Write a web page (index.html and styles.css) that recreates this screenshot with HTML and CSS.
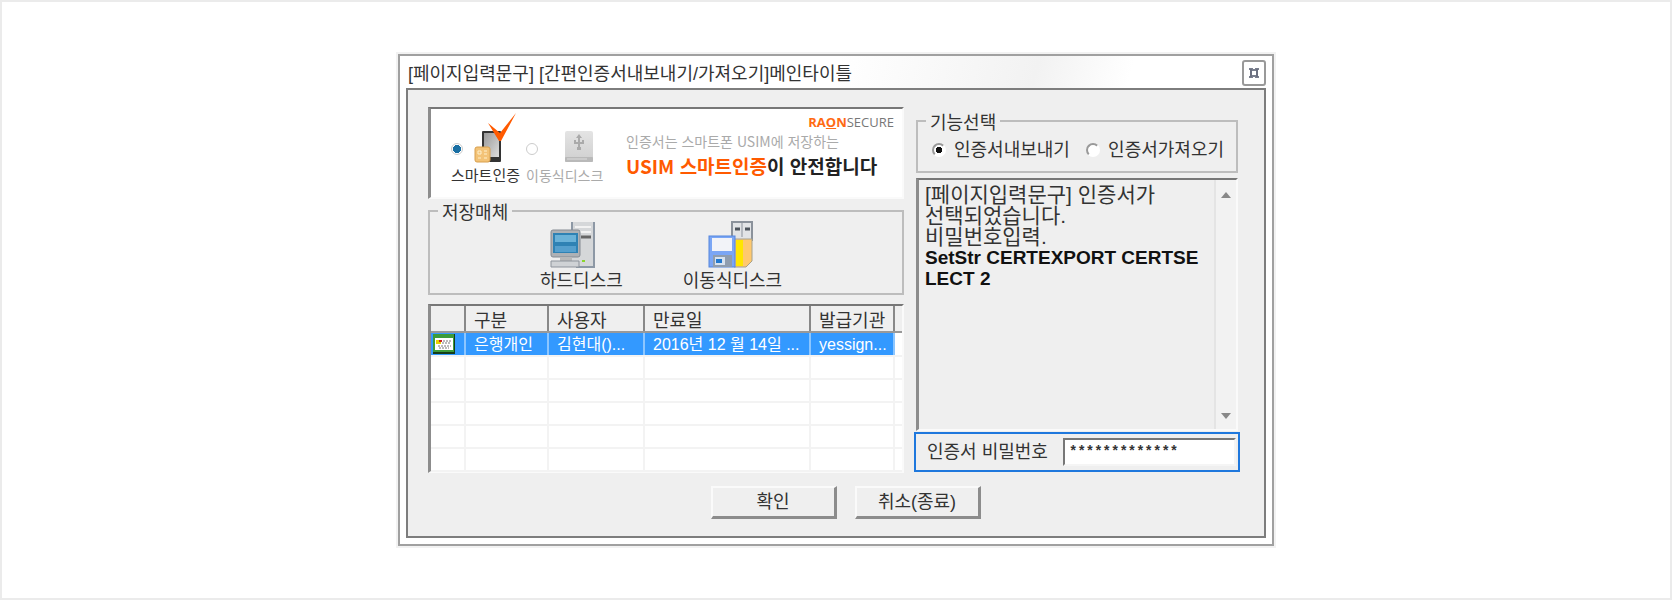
FILE: index.html
```html
<!DOCTYPE html>
<html lang="ko">
<head>
  <meta charset="UTF-8" />
  <meta name="viewport" content="width=device-width, initial-scale=1.0"/>
  <title>간편인증서 내보내기/가져오기</title>
  <link rel="stylesheet" href="styles.css">
</head>
<body>
  <form class="window">
    <div class="titlebar">
      <h1>[페이지입력문구] [간편인증서내보내기/가져오기]메인타이틀</h1>
      <button class="close" type="button" aria-label="닫기">
        <svg width="12" height="12" viewBox="0 0 12 12" fill="none" stroke="#7a7f8e" stroke-width="2">
          <path d="M1 2h4M7 2h4M1 10h4M7 10h4M4 3h4M4 9h4"/>
          <path d="M3 2v8M9 2v8" stroke="#6b7080"/>
        </svg>
      </button>
    </div>

    <div class="panel">
      <div class="columns">
        <div class="left">
          <div class="banner sunken">
            <div class="media">
              <label class="medium">
                <input type="radio" name="medium" checked>
                <svg width="44" height="50" viewBox="0 0 44 50">
                  <defs>
                    <linearGradient id="phone" x1="0" y1="0" x2="1" y2="1">
                      <stop offset="0" stop-color="#999"/>
                      <stop offset="1" stop-color="#ddd"/>
                    </linearGradient>
                  </defs>
                  <rect x="8" y="18" width="19" height="31" rx="1" fill="#333"/>
                  <rect x="10" y="20" width="15" height="24" fill="url(#phone)"/>
                  <rect x="1" y="34" width="15" height="15" rx="2" fill="#f3c377" stroke="#d9a04e"/>
                  <path d="M4 38h3v3h-3zM10 38h3M10 41h3M4 45h3M10 45h3" fill="none" stroke="#fff0cc"/>
                  <path d="M14 10L26 20L42 0L27 28L25 28Z" fill="#ff5a00"/>
                </svg>
                <span>스마트인증</span>
              </label>
              <label class="medium off">
                <input type="radio" name="medium">
                <svg width="30" height="50" viewBox="0 0 30 50">
                  <defs>
                    <linearGradient id="drive" x1="0" y1="0" x2="0" y2="1">
                      <stop offset="0" stop-color="#e4e4e4"/>
                      <stop offset="1" stop-color="#cfcfcf"/>
                    </linearGradient>
                  </defs>
                  <rect x="1" y="18" width="28" height="31" rx="2" fill="url(#drive)"/>
                  <rect x="1" y="44" width="28" height="5" rx="1" fill="#b9b9b9"/>
                  <path d="M3 46h20" stroke="#ddd"/>
                  <path d="M15 36V25M11 27v3h8v-3" fill="none" stroke="#aaa" stroke-width="2"/>
                  <path d="M12 25l3-4 3 4zM13 34h4v3h-4z" fill="#aaa"/>
                </svg>
                <span>이동식디스크</span>
              </label>
            </div>
            <div class="slogan">
              <div class="brand"><b>RA<span class="brand-o">O</span>N</b>SECURE</div>
              <p class="lead">인증서는 스마트폰 USIM에 저장하는</p>
              <p class="claim"><em>USIM 스마트인증</em>이 안전합니다</p>
            </div>
          </div>

          <fieldset class="group storage">
            <legend>저장매체</legend>
            <div class="disks">
              <button type="button" class="disk">
                <svg width="62" height="48" viewBox="0 0 62 48">
                  <path d="M22 1h22v45H22z" fill="#d5d7d9"/>
                  <path d="M22 1v12M44 1v45H26" fill="none" stroke="#8d98a5" stroke-width="2"/>
                  <path d="M25 6h16M25 11h16" stroke="#f2f2f2" stroke-width="2"/>
                  <path d="M31 16h10" stroke="#666" stroke-width="3"/>
                  <rect x="1" y="9" width="29" height="27" rx="2" fill="#aeb1b5" stroke="#858b93"/>
                  <rect x="3" y="12" width="25" height="20" fill="#2f82b4"/>
                  <path d="M5 14h21v7H5z" fill="#6bb2d8"/>
                  <path d="M5 25h21v6H5z" fill="#559fcd"/>
                  <path d="M10 36h12v4H10z" fill="#b8b8b8"/>
                  <path d="M1 40h28v6H1z" fill="#cfd2d5" stroke="#8d939b"/>
                  <path d="M32 40h3" stroke="#8ad52c" stroke-width="2"/>
                </svg>
                <span>하드디스크</span>
              </button>
              <button type="button" class="disk">
                <svg width="48" height="48" viewBox="0 0 48 48">
                  <rect x="24" y="1" width="20" height="18" fill="#e2e4e6" stroke="#8b929b" stroke-width="2"/>
                  <path d="M34 2v14" stroke="#8b929b"/>
                  <path d="M27 8h5M37 8h5" stroke="#4d545c" stroke-width="3"/>
                  <path d="M26 18h18v22l-6 6H26z" fill="#ffc96e" stroke="#a6a08c"/>
                  <path d="M28 19h7v26h-7z" fill="#ffe600"/>
                  <rect x="1" y="15" width="26" height="31" fill="#7ba6f5" stroke="#5585dd"/>
                  <rect x="4" y="17" width="20" height="13" fill="#f2f3f8"/>
                  <path d="M5 34h19v12H5z" fill="#8f9daf"/>
                  <path d="M7 36h10v8H7z" fill="#d7e2f0"/>
                  <path d="M8 38h6v4H8z" fill="#2379cf"/>
                </svg>
                <span>이동식디스크</span>
              </button>
            </div>
          </fieldset>

          <div class="list sunken">
            <table>
              <colgroup>
                <col class="c-icon"><col class="c-type"><col class="c-user"><col class="c-date"><col class="c-issuer"><col>
              </colgroup>
              <thead>
                <tr><th></th><th>구분</th><th>사용자</th><th>만료일</th><th>발급기관</th><th></th></tr>
              </thead>
              <tbody>
                <tr class="selected">
                  <td class="cert">
                    <svg width="22" height="20" viewBox="0 0 22 20">
                      <rect width="22" height="20" fill="#153d19"/>
                      <rect width="21" height="18" fill="#3c9b3a"/>
                      <rect x="2" y="4" width="18" height="12" fill="#fff"/>
                      <path d="M3 6h5v4H3z" fill="#e6d400"/>
                      <path d="M6 7h3" stroke="#c22" stroke-width="2"/>
                      <path d="M10 7h8M9 9h9M5 12h13M6 14h10" stroke="#777" stroke-dasharray="2 1"/>
                    </svg>
                  </td>
                  <td>은행개인</td><td>김현대()...</td><td>2016년 12 월 14일 ...</td><td>yessign...</td><td></td>
                </tr>
                <tr><td></td><td></td><td></td><td></td><td></td><td></td></tr>
                <tr><td></td><td></td><td></td><td></td><td></td><td></td></tr>
                <tr><td></td><td></td><td></td><td></td><td></td><td></td></tr>
                <tr><td></td><td></td><td></td><td></td><td></td><td></td></tr>
                <tr><td></td><td></td><td></td><td></td><td></td><td></td></tr>
              </tbody>
            </table>
          </div>
        </div>

        <div class="right">
          <fieldset class="group mode">
            <legend>기능선택</legend>
            <div class="modes">
              <label><input type="radio" name="mode" checked>인증서내보내기</label>
              <label><input type="radio" name="mode">인증서가져오기</label>
            </div>
          </fieldset>

          <div class="log sunken">
            <div class="log-text">
              <p>[페이지입력문구] 인증서가 선택되었습니다.</p>
              <p>비밀번호입력.</p>
              <p class="code">SetStr CERTEXPORT CERTSELECT 2</p>
            </div>
            <div class="scrollbar">
              <svg width="10" height="6" viewBox="0 0 10 6"><path d="M0 6L5 0L10 6Z" fill="#888"/></svg>
              <svg width="10" height="6" viewBox="0 0 10 6"><path d="M0 0L5 6L10 0Z" fill="#888"/></svg>
            </div>
          </div>

          <div class="password">
            <label for="certPassword">인증서 비밀번호</label>
            <input type="text" id="certPassword" value="*************" autocomplete="off">
          </div>
        </div>
      </div>

      <div class="buttons">
        <button class="button" type="submit">확인</button>
        <button class="button" type="button">취소(종료)</button>
      </div>
    </div>
  </form>
</body>
</html>
```
FILE: styles.css
```css
* {
  box-sizing: border-box;
}

body {
  margin: 0;
  min-height: 100vh;
  display: flex;
  align-items: center;
  justify-content: center;
  background-color: #fff;
  border: 2px solid #ebebeb;
  font-family: "Liberation Sans", "Noto Sans CJK KR", sans-serif;
  font-size: 18px;
  line-height: 20px;
  color: #333;
}

button, input {
  font: inherit;
  color: inherit;
  margin: 0;
}

p, h1 {
  margin: 0;
}

.window {
  width: 100%;
  max-width: 876px;
  padding: 0 6px 6px;
  border: 2px solid #a0a0a0;
  box-shadow: 0 0 0 2px #f2f2f2;
}

.titlebar {
  display: flex;
  align-items: center;
  justify-content: space-between;
  height: 32px;
  padding-left: 2px;
  background: linear-gradient(105deg, #fff 50%, #f2f2f2 73%, #fff 84%);
}

h1 {
  padding-top: 4px;
  font-size: 18px;
  font-weight: normal;
}

.close {
  display: flex;
  align-items: center;
  justify-content: center;
  width: 24px;
  height: 26px;
  margin-top: 2px;
  padding: 0;
  background: #fff;
  border: 2px solid #999;
  border-radius: 3px;
}

.panel {
  padding: 17px 24px 17px 20px;
  background-color: #efefef;
  border: 2px solid #7d7d7d;
}

.columns {
  display: flex;
  gap: 10px;
}

.left {
  flex: 1;
  min-width: 0;
}

.right {
  width: 326px;
}

.sunken {
  border: 2px solid #fafafa;
  border-top-color: #777;
  border-left: 3px solid #8c8c8c;
}

/* banner */
.banner {
  display: flex;
  justify-content: space-between;
  height: 92px;
  padding: 4px 8px 0 20px;
  background-color: #fff;
}

.media {
  display: flex;
  gap: 6px;
}

.medium {
  display: grid;
  grid-template-columns: auto auto;
  justify-content: center;
  align-content: start;
  align-items: end;
  column-gap: 8px;
  font-size: 15px;
}

.medium span {
  grid-column: 1 / 3;
  padding-top: 3px;
}

.off {
  column-gap: 16px;
  font-size: 14px;
  color: #aaa;
}

input[type="radio"] {
  appearance: none;
  width: 14px;
  height: 14px;
  flex: none;
  border: 2px solid #999;
  border-right-color: #fff;
  border-bottom-color: #fff;
  border-radius: 50%;
  background-color: #fff;
}

input[type="radio"]:checked {
  background-image: radial-gradient(circle, #111 3px, transparent 3px);
}

.medium input[type="radio"] {
  width: 12px;
  height: 12px;
  margin-bottom: 8px;
  border: 1px solid #ccc;
}

.medium input[type="radio"]:checked {
  background-image: radial-gradient(circle, #1a6fa3 4px, transparent 4px);
}

.slogan {
  width: 268px;
  font-family: "Noto Sans CJK KR", sans-serif;
}

.brand {
  text-align: right;
  font-family: "Open Sans", sans-serif;
  font-size: 13px;
  line-height: 18px;
  color: #777;
}

.brand b {
  color: #ff6a13;
}

.brand-o {
  text-decoration: underline;
}

.lead {
  font-size: 14px;
  line-height: 20px;
  color: #aaa;
}

.claim {
  font-size: 19px;
  line-height: 30px;
  font-weight: bold;
  color: #222;
}

.claim em {
  font-style: normal;
  color: #ff5a00;
}

/* group boxes */
.group {
  margin: 0;
  padding: 0;
  border: 2px solid #bdbdbd;
}

.group legend {
  margin-left: 8px;
  padding: 4px 4px 0;
}

.group.storage {
  height: 96px;
}

.disks {
  display: flex;
  gap: 60px;
  padding-left: 110px;
}

.disk {
  display: flex;
  flex-direction: column;
  align-items: center;
  gap: 2px;
  margin-top: -2px;
  padding: 0;
  background: none;
  border: none;
}

/* certificate list */
.list {
  margin-top: 9px;
  height: 169px;
  background-color: #fff;
}

table {
  width: 100%;
  table-layout: fixed;
  border-collapse: collapse;
}

.c-icon { width: 34px; }
.c-type { width: 83px; }
.c-user { width: 96px; }
.c-date { width: 166px; }
.c-issuer { width: 84px; }

th, td {
  height: 23px;
  padding: 0 0 0 8px;
  text-align: left;
  font-weight: normal;
  white-space: nowrap;
  overflow: hidden;
}

th {
  height: 26px;
  padding-top: 4px;
  background-color: #efefef;
  border-right: 2px solid #888;
  border-bottom: 2px solid #999;
}

th:last-child {
  border-right: none;
}

td {
  border-right: 2px solid #f3f3f3;
  border-bottom: 2px solid #f3f3f3;
}

td:last-child {
  border-right: none;
}

.selected td {
  height: 24px;
  padding-top: 2px;
  font-size: 16px;
  color: #fff;
  background-color: #3399ff;
  border-right-color: #8cc6ff;
}

.selected td:last-child {
  background-color: #fff;
}

.selected .cert {
  padding: 0 0 0 2px;
}

.cert svg {
  display: block;
}

/* right column */
.group.mode {
  height: 64px;
  margin: 2px 2px 0;
}

.modes {
  display: flex;
  justify-content: space-between;
  padding: 7px 12px 0 14px;
}

.modes label {
  display: flex;
  align-items: center;
  gap: 8px;
  height: 20px;
}

.log {
  display: flex;
  height: 253px;
  margin: 5px 2px 0;
}

.log-text {
  flex: 1;
  padding: 4px 12px 0 6px;
  font-size: 21px;
  line-height: 21px;
  word-break: keep-all;
}

.log-text .code {
  font-size: 19px;
  font-weight: bold;
  color: #111;
  word-break: break-all;
}

.scrollbar {
  display: flex;
  flex-direction: column;
  align-items: center;
  justify-content: space-between;
  width: 22px;
  padding: 12px 0 10px;
  background-color: #f2f2f2;
  border-left: 2px solid #e4e4e4;
}

.password {
  display: flex;
  align-items: center;
  justify-content: space-between;
  height: 40px;
  margin-top: 1px;
  padding: 0 2px 0 11px;
  border: 2px solid #1f78dd;
}

.password input {
  width: 173px;
  height: 28px;
  padding: 0 4px;
  font-family: "Liberation Mono", monospace;
  font-size: 14px;
  font-weight: bold;
  background-color: #fff;
  border: 2px solid #f5f5f5;
  border-top-color: #777;
  border-left-color: #777;
}

/* bottom buttons */
.buttons {
  display: flex;
  justify-content: center;
  gap: 18px;
  margin-top: 13px;
  padding-left: 23px;
}

.button {
  width: 126px;
  height: 33px;
  padding: 0;
  background-color: #efefef;
  border: 2px solid #fafafa;
  border-right: 3px solid #8c8c8c;
  border-bottom: 3px solid #8c8c8c;
}
```
